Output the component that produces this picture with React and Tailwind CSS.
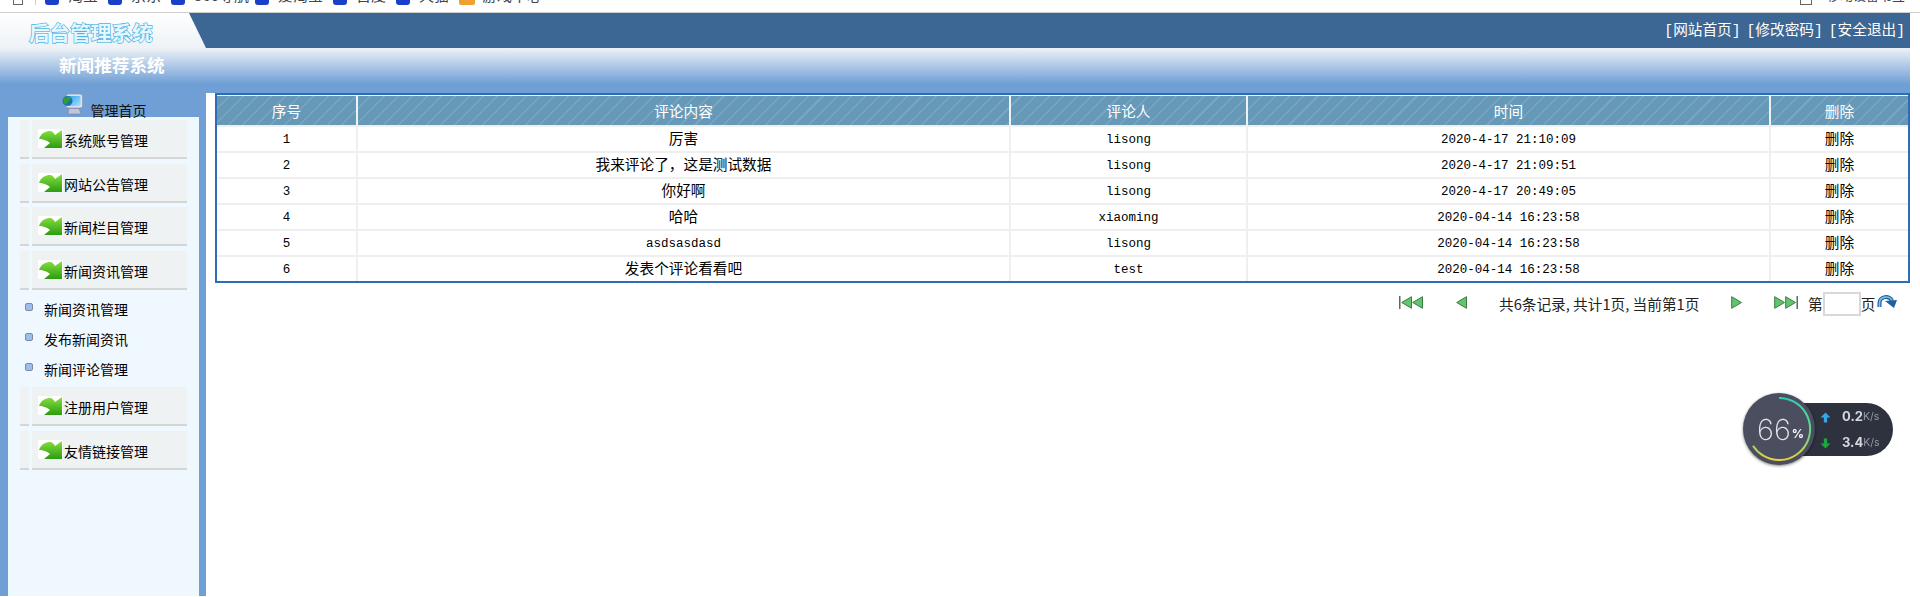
const sans = 'font-["Noto_Sans_CJK_SC",sans-serif]'

function GreenArrow() {
  return (
    <svg width="25" height="19" viewBox="0 0 25 19" className="shrink-0 bg-white">
      <defs>
        <linearGradient id="ga" x1="0" y1="0" x2="0" y2="1">
          <stop offset="0" stopColor="#86e040" />
          <stop offset="1" stopColor="#2c9c10" />
        </linearGradient>
      </defs>
      <path d="M1 10 C3 4 8 2 12 2 C14 2 16 4 17 6 L24 1 L24 19 L6 19 L12 14 C10 12 5 10 1 10 Z" fill="url(#ga)" />
    </svg>
  )
}

function MonitorIcon() {
  return (
    <svg width="21" height="22" viewBox="0 0 21 22">
      <defs>
        <linearGradient id="scr" x1="0" y1="0" x2="1" y2="1">
          <stop offset="0" stopColor="#35a4f2" />
          <stop offset="1" stopColor="#a6e2ff" />
        </linearGradient>
      </defs>
      <rect x="4" y="1" width="16.5" height="14" rx="2.5" fill="#d6e4f4" stroke="#8f98b0" strokeWidth="0.8" />
      <rect x="6.5" y="3" width="12" height="10" rx="1" fill="url(#scr)" />
      <path d="M7 15.5 L17 15.5 L19 21 L6 21 Z" fill="#c3c4da" stroke="#85859f" strokeWidth="0.6" />
      <circle cx="5.5" cy="8" r="5" fill="#1e6fb0" />
      <path d="M1.5 6 C3 3.5 7 3 9 5 C8 8 5 8 4 12 C2 11 0.8 8.5 1.5 6 Z" fill="#2f9e3a" />
    </svg>
  )
}

function Tri({ dir, x = 0 }) {
  const d = dir === 'left' ? `M${x + 10.5} 0.7 L${x + 0.7} 6.5 L${x + 10.5} 12.3 Z` : `M${x + 0.7} 0.7 L${x + 10.5} 6.5 L${x + 0.7} 12.3 Z`
  return <path d={d} fill="#62c46c" stroke="#3a7d44" strokeWidth="1" />
}

function NavOne({ dir, className = '' }) {
  return (
    <svg width="11" height="13" viewBox="0 0 11 13" className={`self-start mt-1 ${className}`}>
      <Tri dir={dir} />
    </svg>
  )
}

function NavEnd({ dir, className = '' }) {
  return (
    <svg width="24" height="13" viewBox="0 0 24 13" className={`self-start mt-1 ${className}`}>
      {dir === 'left' ? (
        <>
          <rect x="0" y="0" width="1.5" height="13" fill="#5c6b5f" />
          <Tri dir="left" x={2} />
          <Tri dir="left" x={13} />
        </>
      ) : (
        <>
          <Tri dir="right" x={0} />
          <Tri dir="right" x={11} />
          <rect x="22.5" y="0" width="1.5" height="13" fill="#5c6b5f" />
        </>
      )}
    </svg>
  )
}

function MenuItem({ label, className = '' }) {
  return (
    <div className={`flex h-[39px] pl-3 gap-[3px] ${className}`}>
      <div className="w-[9px] bg-[#eef2f3] border-b-2 border-[#d4d6d6]" />
      <div className="w-[155px] flex items-center pl-[6px] bg-[#eef2f3] border-b-2 border-[#d4d6d6]">
        <GreenArrow />
        <span className="pl-px pt-[2px] text-sm text-black">{label}</span>
      </div>
    </div>
  )
}

function SubItem({ label }) {
  return (
    <div className="h-[30px] flex pl-[17px]">
      <span className="w-2 h-2 mt-[9px] rounded-[2px] bg-[#9dbcf0] border border-[#7f8a9c]" />
      <span className="ml-[11px] text-sm leading-[30px] text-black">{label}</span>
    </div>
  )
}

const rows = [
  ['1', '厉害', 'lisong', '2020-4-17 21:10:09'],
  ['2', '我来评论了，这是测试数据', 'lisong', '2020-4-17 21:09:51'],
  ['3', '你好啊', 'lisong', '2020-4-17 20:49:05'],
  ['4', '哈哈', 'xiaoming', '2020-04-14 16:23:58'],
  ['5', 'asdsasdasd', 'lisong', '2020-04-14 16:23:58'],
  ['6', '发表个评论看看吧', 'test', '2020-04-14 16:23:58'],
]

const mono = 'font-["Liberation_Mono",monospace] text-[12.5px] pt-[2px]'
const th = 'border-t border-l-2 first:border-l-0 border-[#eef2f5] p-0 font-normal text-white'
const td = 'border-t-2 border-l-2 first:border-l-0 border-[#efefef] p-0 text-center'

function Widget() {
  return (
    <div className="absolute left-[1743px] top-[403px] h-[53px] w-[150px] blur-[0.3px]">
      <div className="absolute right-0 top-0 h-[53px] w-[115px] pt-px rounded-r-[27px] bg-[#2e323f] text-[#d5d7dc] font-['Inter',sans-serif]">
        <div className="flex items-center h-[26px] pl-[42px] text-[13px] font-bold">
          <svg width="11" height="11" viewBox="0 0 10 10" className="mr-[11px]">
            <path d="M5 0.5 L9.5 5 L6.5 5 L6.5 9.5 L3.5 9.5 L3.5 5 L0.5 5 Z" fill="#38a7e8" />
          </svg>
          0.2<span className="text-[10.5px] font-normal text-[#9499a6]">K/s</span>
        </div>
        <div className="flex items-center h-[26px] pl-[42px] text-[13px] font-bold">
          <svg width="11" height="11" viewBox="0 0 10 10" className="mr-[11px]">
            <path d="M5 9.5 L9.5 5 L6.5 5 L6.5 0.5 L3.5 0.5 L3.5 5 L0.5 5 Z" fill="#1fa83a" />
          </svg>
          3.4<span className="text-[10.5px] font-normal text-[#9499a6]">K/s</span>
        </div>
      </div>
      <div className="absolute left-0 top-[-10px] h-[72px] w-[72px] pl-[3px] rounded-full bg-[#4a4e5f] shadow-[0_1px_3px_rgba(0,0,0,0.5)] flex items-center justify-center text-white font-['Inter',sans-serif]">
        <svg width="72" height="72" viewBox="0 0 72 72" className="absolute inset-0">
          <defs>
            <linearGradient id="ring" x1="0.5" y1="0" x2="0.5" y2="1">
              <stop offset="0" stopColor="#2fcfb8" />
              <stop offset="0.6" stopColor="#74d482" />
              <stop offset="1" stopColor="#e8d23a" />
            </linearGradient>
          </defs>
          <path d="M36 5 A31 31 0 1 1 10 52.7" fill="none" stroke="url(#ring)" strokeWidth="2" />
        </svg>
        <span className="text-[29px] font-extralight text-[#e4e5e9] leading-none">66</span>
        <span className="text-xs font-bold mt-[10px] ml-px">%</span>
      </div>
    </div>
  )
}

export default function App() {
  return (
    <div className={`relative w-[1920px] h-[597px] overflow-hidden bg-white ${sans}`}>
      <div className="h-3 overflow-hidden text-[15px] text-[#444]">
        <div className="relative flex items-center h-5 -mt-[15px] pl-[13px]">
          <span className="w-[10px] h-5 border border-[#666] mr-3" />
          <span className="w-px h-5 bg-[#ccc] mr-[9px]" />
          {[['淘宝', 'w-[63px]'], ['京东', 'w-[63px]'], ['360导航', 'w-[84px]'], ['爱淘宝', 'w-[78px]'], ['百度', 'w-[63px]'], ['天猫', 'w-[63px]']].map(([t, w]) => (
            <span key={t} className={`flex items-center gap-[9px] ${w}`}>
              <span className="w-[14px] h-5 rounded-[3px] bg-[#1a3fc8]" />
              {t}
            </span>
          ))}
          <span className="flex items-center gap-[7px]">
            <span className="w-4 h-5 rounded-[2px] bg-[#f0a030]" />
            游戏中心
          </span>
          <span className="ml-auto mr-[15px] flex items-center gap-[15px] text-[13px]">
            <span className="w-3 h-5 border border-[#666]" />
            移动设备书签
          </span>
        </div>
      </div>
      <div className="h-px bg-[#cfcfcf]" />

      <div className="w-[1910px]">
        <div className="relative h-[35px] bg-[#3c6693] flex items-center justify-end pr-[5px]">
          <div className="absolute left-0 top-0 h-[35px] w-[206px] bg-gradient-to-b from-white to-[#eef2f6] [clip-path:polygon(0_0,189px_0,206px_100%,0_100%)]" />
          <div className="absolute left-[29px] top-[7px] text-[20.6px] leading-[24px] font-bold text-[#e6f7fd] [-webkit-text-stroke:1.4px_#4db4e4] [paint-order:stroke_fill]">
            后台管理系统
          </div>
          <div className="flex gap-[6px] text-[14.67px] text-white font-['Liberation_Mono','Noto_Sans_CJK_SC',monospace]">
            <a>[网站首页]</a>
            <a>[修改密码]</a>
            <a>[安全退出]</a>
          </div>
        </div>

        <div className="h-[45px] bg-gradient-to-b from-[#eef2f6] to-[#6f9fd5] to-[80%] pl-[59px] pt-[5px]">
          <h1 className="text-[17.6px] leading-[26px] font-bold text-white font-['Liberation_Serif','Noto_Sans_CJK_SC',serif]">新闻推荐系统</h1>
        </div>

        <div className="flex h-[503px]">
          <aside className="w-[206px] shrink-0 bg-[#6f9fd5] flex flex-col">
            <div className="h-6 flex justify-center pl-[2px] gap-[8px] relative">
              <MonitorIcon />
              <span className="text-sm leading-[20px] mt-[7px] text-[#111]">管理首页</span>
            </div>
            <div className="flex-1 ml-2 w-[191px] bg-[#eff7ff] pt-[3px]">
              <MenuItem label="系统账号管理" className="mb-[5px]" />
              <MenuItem label="网站公告管理" className="mb-1" />
              <MenuItem label="新闻栏目管理" className="mb-[5px]" />
              <MenuItem label="新闻资讯管理" className="mb-1" />
              <SubItem label="新闻资讯管理" />
              <SubItem label="发布新闻资讯" />
              <SubItem label="新闻评论管理" />
              <MenuItem label="注册用户管理" className="mt-[3px] mb-[5px]" />
              <MenuItem label="友情链接管理" />
            </div>
          </aside>

          <main className="flex-1 pl-[9px]">
            <div className="border-2 border-[#2e6bb8]">
              <table className="w-full table-fixed border-separate border-spacing-0 text-[14.67px] leading-5 text-black">
                <colgroup>
                  <col className="w-[139px]" />
                  <col className="w-[653px]" />
                  <col className="w-[237px]" />
                  <col className="w-[523px]" />
                  <col />
                </colgroup>
                <thead>
                  <tr className="h-[30px] bg-[#6699b8] bg-[repeating-linear-gradient(135deg,#6699b8_0,#6699b8_8.5px,#78a6c2_8.5px,#78a6c2_10px)]">
                    <th className={th}>序号</th>
                    <th className={th}>评论内容</th>
                    <th className={th}>评论人</th>
                    <th className={th}>时间</th>
                    <th className={th}>删除</th>
                  </tr>
                </thead>
                <tbody>
                  {rows.map((r) => (
                    <tr key={r[0]} className="h-[26px]">
                      <td className={`${td} ${mono}`}>{r[0]}</td>
                      <td className={`${td} ${r[1] === 'asdsasdasd' ? mono : 'pb-[3px]'}`}>{r[1]}</td>
                      <td className={`${td} ${mono}`}>{r[2]}</td>
                      <td className={`${td} ${mono}`}>{r[3]}</td>
                      <td className={`${td} pb-[3px]`}>删除</td>
                    </tr>
                  ))}
                </tbody>
              </table>
            </div>

            <div className="mt-[9px] flex items-center h-6 pl-[1184px] text-[14.67px] text-[#222]">
              <NavEnd dir="left" />
              <NavOne dir="left" className="ml-[33px]" />
              <span className="ml-8 w-[232px]">共6条记录, 共计1页, 当前第1页</span>
              <NavOne dir="right" />
              <NavEnd dir="right" className="ml-8" />
              <span className="ml-[10px]">第</span>
              <input className="w-[38px] h-6 bg-white border-2 border-[#d8d8d8]" />
              <span>页</span>
              <svg width="20" height="13" viewBox="0 0 20 13" className="self-start mt-[3px] ml-[2px]">
                <path d="M2.5 12 L2.5 8 C2.5 1 13 0 15 6" fill="none" stroke="#1f5f9c" strokeWidth="4" />
                <path d="M2.5 12 L2.5 8 C2.5 1 13 0 15 6" fill="none" stroke="#7cc0ec" strokeWidth="1.6" />
                <path d="M8 6 L20 5 L17 13 Z" fill="#1f5f9c" />
              </svg>
            </div>
          </main>
        </div>
      </div>
      <Widget />
    </div>
  )
}
